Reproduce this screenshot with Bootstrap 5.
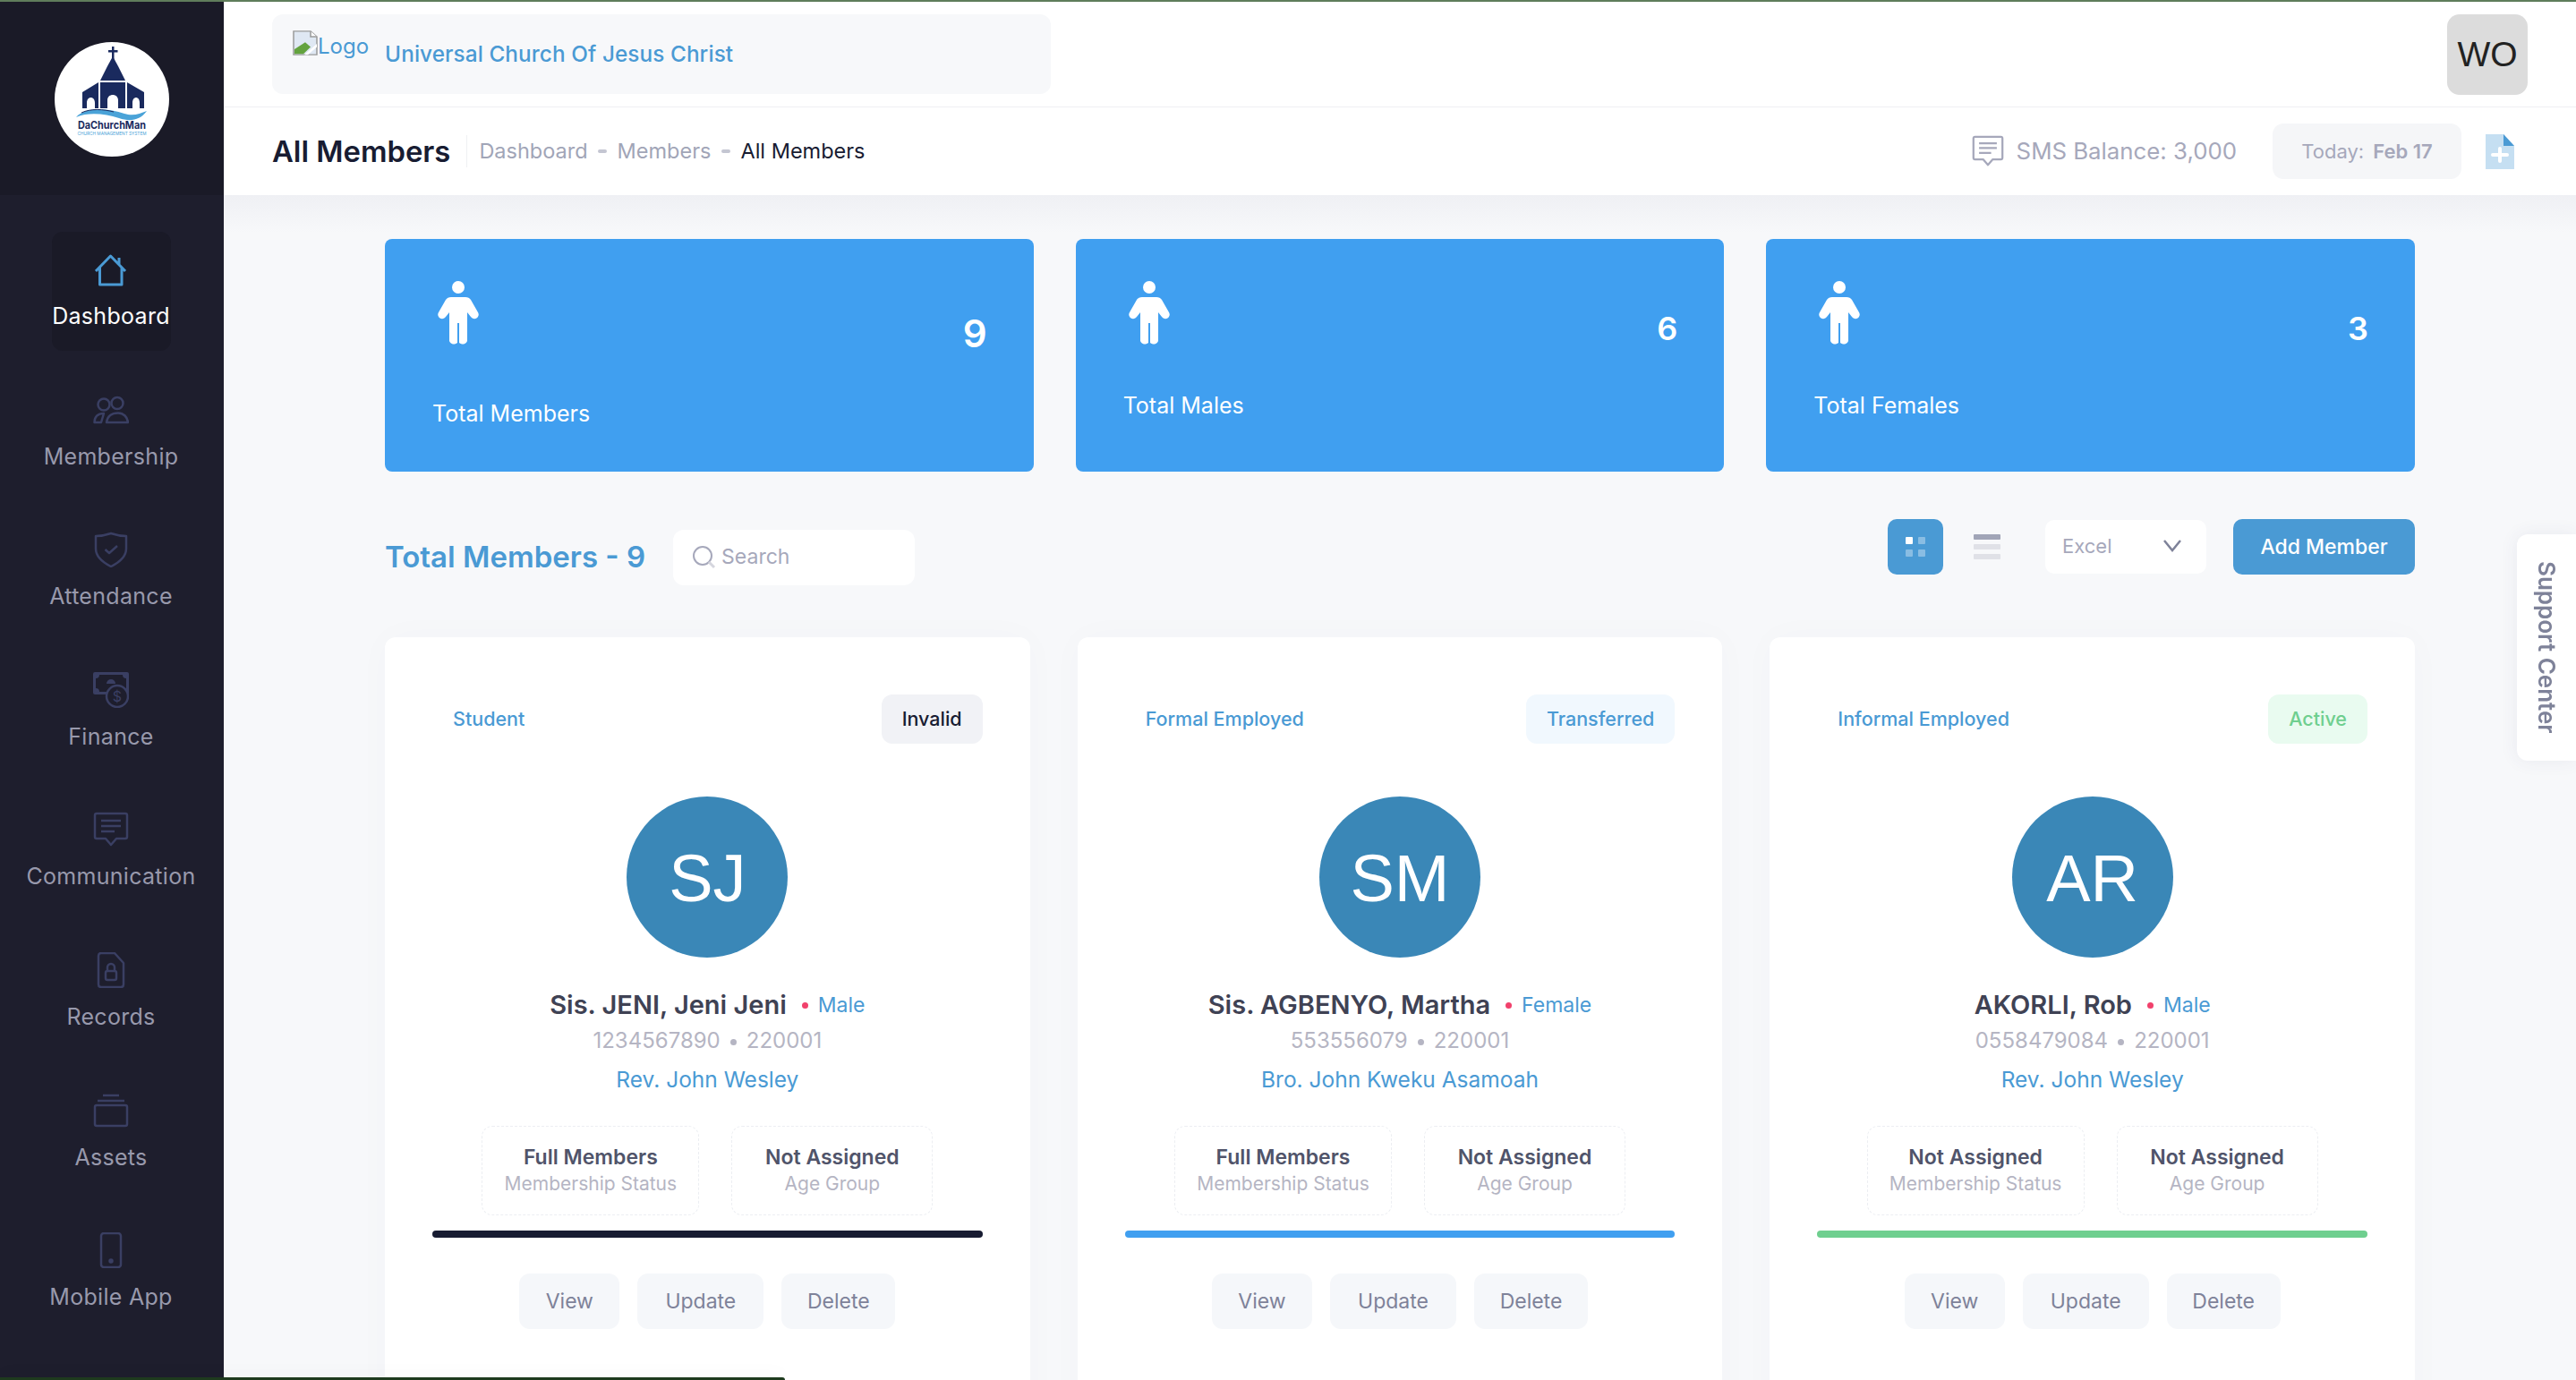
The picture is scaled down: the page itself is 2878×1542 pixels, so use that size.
<!DOCTYPE html>
<html lang="en">
<head>
    <meta charset="UTF-8">
    <title>All Members</title>
    <link href="https://cdn.jsdelivr.net/npm/bootstrap@5.3.2/dist/css/bootstrap.min.css" rel="stylesheet">
    <style>
        html, body {
            height: 100%;
        }

        body {
            font-family: Inter, "Noto Sans", sans-serif;
            background: #f7f8fa;
            overflow: hidden;
        }

        .app-shell {
            height: 100vh;
            border-top: 2px solid #5f7d5b;
        }

        /* sidebar */
        .side-col {
            width: 250px;
            flex: 0 0 250px;
            background: #1e1e2d;
        }

        .side-brand {
            height: 216px;
            background: #1a1a27;
            padding-top: 45px;
        }

        .brand-disc {
            width: 128px;
            height: 128px;
            display: block;
            margin: 0 auto;
        }

        .side-nav {
            padding: 41px 2px 0 0;
        }

        .side-item {
            width: 133px;
            height: 133px;
            margin: 0 auto 23.6px;
            padding-top: 22px;
            border-radius: 12px;
            color: #9899ac;
            font-size: 25px;
            letter-spacing: .3px;
            line-height: 30px;
            text-decoration: none;
            white-space: nowrap;
        }

        .side-item.is-on {
            background: #1a1a27;
            color: #fff;
        }

        .side-ico {
            width: 40px;
            height: 40px;
            margin-bottom: 17px;
            flex: 0 0 40px;
            color: #3a3f63;
        }

        .is-on .side-ico {
            color: #4a9ad4;
        }

        /* header */
        .main-col {
            min-width: 0;
        }

        .top-strip {
            height: 118px;
            padding: 14px 54px 0 54px;
            background: #fff;
            border-bottom: 1px solid #eff0f3;
        }

        .org-banner {
            width: 870px;
            height: 89px;
            padding-left: 23px;
            background: #f7f8fa;
            border-radius: 12px;
        }

        .org-broken {
            margin-top: -25px;
        }

        .org-logo {
            color: #4a9ad4;
            font-size: 24px;
            line-height: 34px;
            margin-top: -17px;
        }

        .org-name {
            margin-left: 18px;
            color: #4a9ad4;
            font-size: 24.3px;
            font-weight: 500;
            letter-spacing: .1px;
        }

        .user-box {
            width: 90px;
            height: 90px;
            border-radius: 14px;
            background: #dcdcdc;
            color: #222;
            font-family: "Liberation Sans", Arial, sans-serif;
            font-size: 39px;
        }

        .sub-strip {
            height: 98px;
            padding: 0 69px 0 54px;
            background: #fff;
        }

        .page-title {
            margin: 0;
            padding-right: 18px;
            border-right: 1px solid #eff0f3;
            color: #181c32;
            font-size: 32.8px;
            line-height: 36px;
            font-weight: 600;
        }

        .crumbs {
            margin-left: 13px;
            color: #a1a5b7;
            font-size: 23.5px;
        }

        .crumb-sep {
            width: 10px;
            height: 4px;
            margin: 0 11.5px;
            background: #c4c6d2;
            border-radius: 2px;
        }

        .crumb-now {
            color: #181c32;
        }

        .sms-note {
            color: #a6a8bb;
            font-size: 25.8px;
        }

        .sms-ico {
            width: 36px;
            height: 36px;
            margin-right: 14px;
        }

        .today-box {
            width: 211px;
            height: 62px;
            margin-left: 40px;
            background: #f5f6f8;
            border-radius: 12px;
            color: #a6a8bb;
            font-size: 22px;
        }

        .today-box b {
            font-weight: 600;
            margin-left: 10px;
        }

        .doc-ico {
            width: 32px;
            height: 40px;
            margin-left: 27px;
        }

        /* content */
        .page-body {
            min-height: 0;
            padding: 49px 180px 0;
            background: linear-gradient(#eff0f4, #f7f8fa 42px);
        }

        .tile-grid {
            display: grid;
            grid-template-columns: repeat(3, 1fr);
            gap: 47px;
        }

        .stat-tile {
            height: 260px;
            padding: 47px 52px 0 53px;
            background: #409ff0;
            border: 0;
            border-radius: 8px;
            color: #fff;
        }

        .stat-tile svg {
            width: 46px;
            height: 72px;
            margin-left: 6px;
        }

        .stat-label {
            margin-top: 60px;
            font-size: 25px;
            line-height: 32px;
        }

        .stat-label.is-up {
            margin-top: 51px;
        }

        .stat-num {
            font-size: 36px;
            font-weight: 600;
            line-height: 44px;
            margin-top: 31px;
        }

        .stat-num.is-big {
            font-size: 42px;
            margin-top: 37px;
        }

        .list-head {
            margin-top: 53px;
            height: 74px;
        }

        .list-title {
            margin: 12px 0 0;
            color: #4a9ad4;
            font-size: 33px;
            line-height: 60px;
            font-weight: 600;
        }

        .find-box {
            width: 270px;
            height: 62px;
            margin: 12px 0 0 31px;
            padding: 0 0 2px 20px;
            background: #fff;
            border-radius: 12px;
            color: #a6a8bb;
            font-size: 23px;
        }

        .find-box svg {
            width: 28px;
            height: 28px;
            margin-right: 6px;
        }

        .view-btn {
            width: 62px;
            height: 62px;
            background: #4a9ad4;
            border-radius: 10px;
        }

        .rows-ico {
            width: 30px;
            height: 28px;
            margin: 0 50px 0 34px;
        }

        .export-pick {
            width: 180px;
            height: 60px;
            padding: 0 28px 2px 19px;
            background: #fff;
            border-radius: 10px;
            color: #a6a8bb;
            font-size: 22px;
        }

        .add-btn {
            width: 203px;
            height: 62px;
            margin-left: 30px;
            background: #4a9ad4;
            border: 0;
            border-radius: 10px;
            color: #fff;
            font-size: 23px;
            font-weight: 500;
        }

        .add-btn:hover {
            background: #3a87b7;
            color: #fff;
        }

        .person-grid {
            display: grid;
            grid-template-columns: repeat(3, 1fr);
            gap: 53px;
            margin-top: 58px;
        }

        .person-card {
            padding: 64px 53px 100px;
            background: #fff;
            border: 0;
            border-radius: 12px;
            box-shadow: 0 0 40px rgba(60, 70, 110, .025);
        }

        .person-kind {
            margin-left: 23px;
            color: #4a9ad4;
            font-size: 21.5px;
            font-weight: 500;
        }

        .state-tag {
            height: 55px;
            padding: 0 23px;
            border-radius: 12px;
            font-size: 21.5px;
            font-weight: 500;
        }

        .tag-invalid {
            background: #f1f2f6;
            color: #181c32;
        }

        .tag-moved {
            background: #f1f8fe;
            color: #4a9ad4;
        }

        .tag-active {
            background: #e9fbf0;
            color: #6fcf8f;
        }

        .initials {
            width: 180px;
            height: 180px;
            margin: 59px auto 0;
            padding-top: 2px;
            background: #3a87b7;
            border-radius: 50%;
            color: #fff;
            font-family: "Liberation Sans", Arial, sans-serif;
            font-size: 74px;
        }

        .name-line {
            margin-top: 33px;
            height: 40px;
            white-space: nowrap;
        }

        .name-line strong {
            color: #3f4254;
            font-size: 29px;
            font-weight: 600;
        }

        .sex-dot {
            width: 7px;
            height: 7px;
            margin: 0 11px 0 17px;
            background: #f1416c;
            border-radius: 50%;
        }

        .sex-text {
            color: #4a9ad4;
            font-size: 23px;
        }

        .id-line {
            height: 40px;
            line-height: 40px;
            color: #b5b5c3;
            font-size: 24px;
        }

        .id-dot {
            display: inline-block;
            width: 7px;
            height: 7px;
            margin: 0 11px;
            vertical-align: middle;
            background: #b5b5c3;
            border-radius: 50%;
        }

        .pastor-line {
            height: 40px;
            margin-top: 3px;
            line-height: 40px;
            color: #4a9ad4;
            font-size: 24.5px;
        }

        .fact-row {
            margin-top: 32px;
            gap: 36px;
        }

        .fact-box {
            height: 100px;
            border: 1px dashed #eceef2;
            border-radius: 12px;
        }

        .fact-wide {
            width: 243px;
        }

        .fact-slim {
            width: 225px;
        }

        .fact-main {
            color: #50546a;
            font-size: 23px;
            font-weight: 600;
            line-height: 30px;
        }

        .fact-sub {
            color: #b5b5c3;
            font-size: 21px;
            line-height: 30px;
            white-space: nowrap;
        }

        .level-bar {
            height: 8px;
            margin-top: 17px;
            border-radius: 4px;
        }

        .bar-navy {
            background: #181c32;
        }

        .bar-blue {
            background: #409ff0;
        }

        .bar-green {
            background: #6fcf8f;
        }

        .act-row {
            margin-top: 40px;
            gap: 20px;
        }

        .act-btn {
            height: 62px;
            padding: 0;
            background: #f5f7fa;
            border: 0;
            border-radius: 12px;
            color: #7e8299;
            font-size: 23px;
        }

        .act-view {
            width: 112px;
        }

        .act-update {
            width: 141px;
        }

        .act-delete {
            width: 127px;
        }

        /* overlays */
        .support-tab {
            position: fixed;
            top: 597px;
            right: 0;
            width: 66px;
            height: 253px;
            background: #fff;
            border-radius: 12px 0 0 12px;
            box-shadow: 0 0 20px rgba(60, 70, 110, .08);
            color: #7e8299;
            font-size: 26px;
            font-weight: 600;
        }

        .support-tab span {
            writing-mode: vertical-rl;
        }

        .foot-strip {
            position: fixed;
            left: 0;
            bottom: 0;
            width: 877px;
            height: 3px;
            background: #1e3a1e;
            border-radius: 0 6px 0 0;
            box-shadow: 0 -4px 18px rgba(0, 0, 0, .07);
        }
    </style>
</head>
<body>
<div class="app-shell d-flex">
    <aside class="side-col">
        <div class="side-brand">
            <svg class="brand-disc" viewBox="0 0 128 128">
                <circle cx="64" cy="64" r="64" fill="#fff"/>
                <g fill="#1a2a5e">
                    <rect x="64" y="5" width="2.500" height="17"/>
                    <rect x="60" y="9" width="10.500" height="2.500"/>
                    <path d="M65 16 L71 27 L79 43 H51 L59 27 Z"/>
                    <path d="M51 45 H79 V74 H71 V65 C71 57 59 57 59 65 V74 H51 Z"/>
                    <path d="M49 45 V74 H45 V68 C45 60 36 60 36 68 V74 H31 V56 Z"/>
                    <path d="M81 45 L100 56 V74 H95 V68 C95 60 87 60 87 68 V74 H81 Z"/>
                </g>
                <path d="M24 84 C34 72 60 74 78 80 C88 83 95 80 103 77 C95 88 84 89 72 85 C56 80 38 78 24 84 Z" fill="#4aa3d8"/>
                <path d="M30 79 C40 74 55 75 66 78" fill="none" stroke="#1a2a5e" stroke-width="1"/>
                <text x="64" y="97" text-anchor="middle" textLength="76" lengthAdjust="spacingAndGlyphs" font-family="Inter, sans-serif" font-weight="700" font-size="12" fill="#1a2a5e">DaChurchMan</text>
                <text x="64" y="104" text-anchor="middle" textLength="77" lengthAdjust="spacingAndGlyphs" font-family="Inter, sans-serif" font-size="5" fill="#4aa3d8">CHURCH MANAGEMENT SYSTEM</text>
            </svg>
        </div>
        <nav class="side-nav">
            <a href="#" class="side-item is-on d-flex flex-column align-items-center">
                <svg class="side-ico" viewBox="0 0 40 40" fill="none" stroke="currentColor" stroke-width="3" stroke-linejoin="round"><path d="M3 22 L19.500 5 L36 22 M7.500 18 V37 H32 V18 M29 7 V15"/></svg>
                Dashboard
            </a>
            <a href="#" class="side-item d-flex flex-column align-items-center">
                <svg class="side-ico" viewBox="0 0 40 40" fill="none" stroke="currentColor" stroke-width="2.500" stroke-linejoin="round"><circle cx="12" cy="14" r="6.500"/><circle cx="27" cy="12.500" r="6.500"/><path d="M1.500 34 C1.500 28 5 24 12 24 L9 34 Z M15 34 C16 27 21 23.500 28 23.500 C34 23.500 38.500 28 39 34 Z"/></svg>
                Membership
            </a>
            <a href="#" class="side-item d-flex flex-column align-items-center">
                <svg class="side-ico" viewBox="0 0 40 40" fill="none" stroke="currentColor" stroke-width="2.500" stroke-linejoin="round"><path d="M20 2 C26 4 31 5 37 5 V19 C37 28 28 35 20 39 C12 35 3 28 3 19 V5 C9 5 14 4 20 2 Z"/><path d="M13.500 20 L18 24 L27 16"/></svg>
                Attendance
            </a>
            <a href="#" class="side-item d-flex flex-column align-items-center">
                <svg class="side-ico" viewBox="0 0 40 40">
                    <rect x="0" y="0" width="40" height="25" rx="2" fill="currentColor"/>
                    <path d="M7 3 H33 Q33 7 37 7 V18 Q33 18 33 22 H7 Q7 18 3 18 V7 Q7 7 7 3 Z" fill="#1e1e2d"/>
                    <path d="M15 13 A5 5 0 0 1 25 13 Z" fill="currentColor"/>
                    <circle cx="27" cy="27" r="12" fill="#1e1e2d" stroke="currentColor" stroke-width="2.500"/>
                    <text x="27" y="33" text-anchor="middle" font-family="Inter, sans-serif" font-size="16" fill="currentColor">$</text>
                </svg>
                Finance
            </a>
            <a href="#" class="side-item d-flex flex-column align-items-center">
                <svg class="side-ico" viewBox="0 0 40 40" fill="none" stroke="currentColor" stroke-width="2.500" stroke-linejoin="round"><path d="M2 4 Q2 2 4 2 H36 Q38 2 38 4 V28 Q38 30 36 30 H26 L20 37 L14 30 H4 Q2 30 2 28 Z"/><path d="M9 10 H31 M9 16 H31 M9 22 H24"/></svg>
                Communication
            </a>
            <a href="#" class="side-item d-flex flex-column align-items-center">
                <svg class="side-ico" viewBox="0 0 40 40" fill="none" stroke="currentColor" stroke-width="2.500" stroke-linejoin="round"><path d="M6 4 Q6 1 9 1 H24 L34 12 V36 Q34 39 31 39 H9 Q6 39 6 36 Z"/><rect x="14" y="21" width="12" height="10" rx="2"/><path d="M16 21 V17 A4 4 0 0 1 24 17 V21"/></svg>
                Records
            </a>
            <a href="#" class="side-item d-flex flex-column align-items-center">
                <svg class="side-ico" viewBox="0 0 40 40" fill="none" stroke="currentColor" stroke-width="2.500" stroke-linejoin="round"><rect x="2" y="14" width="36" height="23" rx="2"/><path d="M5 9 H35 M11 3 H29"/></svg>
                Assets
            </a>
            <a href="#" class="side-item d-flex flex-column align-items-center">
                <svg class="side-ico" viewBox="0 0 40 40" fill="none" stroke="currentColor" stroke-width="2.500"><rect x="9" y="1" width="22" height="38" rx="3"/><circle cx="20" cy="32" r="1.500" fill="currentColor"/></svg>
                Mobile App
            </a>
        </nav>
    </aside>

    <main class="main-col flex-grow-1 d-flex flex-column">
        <header class="top-strip flex-shrink-0 d-flex justify-content-between align-items-start">
            <div class="org-banner d-flex align-items-center">
                <svg width="28" height="28" viewBox="0 0 28 32" preserveAspectRatio="none" class="flex-shrink-0 org-broken">
                    <path d="M1 1 H20 L27 8 V31 H1 Z" fill="#dfe8f3" stroke="#9a9a9a" stroke-width="1.500"/>
                    <path d="M20 1 V8 H27" fill="#fff" stroke="#9a9a9a" stroke-width="1.500"/>
                    <path d="M2 30 V24 L14 15 L20 21 L12 30 Z" fill="#63a33e"/>
                    <path d="M27 17 L13 31 H17 L27 21 Z" fill="#fff"/>
                </svg>
                <span class="org-logo">Logo</span>
                <span class="org-name">Universal Church Of Jesus Christ</span>
            </div>
            <div class="user-box d-flex align-items-center justify-content-center">WO</div>
        </header>

        <div class="sub-strip flex-shrink-0 d-flex justify-content-between align-items-center">
            <div class="d-flex align-items-center">
                <h1 class="page-title">All Members</h1>
                <div class="crumbs d-flex align-items-center">
                    <span>Dashboard</span><span class="crumb-sep"></span><span>Members</span><span class="crumb-sep"></span><span class="crumb-now">All Members</span>
                </div>
            </div>
            <div class="d-flex align-items-center">
                <div class="sms-note d-flex align-items-center">
                    <svg class="sms-ico" viewBox="0 0 40 40" fill="none" stroke="#a6a8bb" stroke-width="2.500" stroke-linejoin="round"><path d="M2 4 Q2 2 4 2 H36 Q38 2 38 4 V28 Q38 30 36 30 H26 L20 37 L14 30 H4 Q2 30 2 28 Z"/><path d="M9 10 H31 M9 16 H31 M9 22 H24"/></svg>
                    SMS Balance: 3,000
                </div>
                <div class="today-box d-flex align-items-center justify-content-center">Today: <b>Feb 17</b></div>
                <svg class="doc-ico" viewBox="0 0 32 40"><path d="M0 1 H20 L32 14 V40 H0 Z" fill="#c5dff2"/><path d="M20 1 L32 14 H20 Z" fill="#4a9ad4"/><path d="M16 17 V31 M8 24 H24" stroke="#fff" stroke-width="4" stroke-linecap="round"/></svg>
            </div>
        </div>

        <div class="page-body flex-grow-1">
            <section class="tile-grid">
                <div class="card stat-tile flex-row justify-content-between">
                    <div>
                        <svg viewBox="0 0 46 72"><circle cx="23" cy="7" r="7" fill="#fff"/><path fill="#fff" d="M15 18 H31 Q35 18 37 21 L45 35 A4.500 4.500 0 0 1 37 40 L33 35 V67 A5.500 5.500 0 0 1 24 69 V47 H22 V69 A5.500 5.500 0 0 1 13 67 V35 L9 40 A4.500 4.500 0 0 1 1 35 L9 21 Q11 18 15 18 Z"/></svg>
                        <div class="stat-label">Total Members</div>
                    </div>
                    <div class="stat-num is-big">9</div>
                </div>
                <div class="card stat-tile flex-row justify-content-between">
                    <div>
                        <svg viewBox="0 0 46 72"><circle cx="23" cy="7" r="7" fill="#fff"/><path fill="#fff" d="M15 18 H31 Q35 18 37 21 L45 35 A4.500 4.500 0 0 1 37 40 L33 35 V67 A5.500 5.500 0 0 1 24 69 V47 H22 V69 A5.500 5.500 0 0 1 13 67 V35 L9 40 A4.500 4.500 0 0 1 1 35 L9 21 Q11 18 15 18 Z"/></svg>
                        <div class="stat-label is-up">Total Males</div>
                    </div>
                    <div class="stat-num">6</div>
                </div>
                <div class="card stat-tile flex-row justify-content-between">
                    <div>
                        <svg viewBox="0 0 46 72"><circle cx="23" cy="7" r="7" fill="#fff"/><path fill="#fff" d="M15 18 H31 Q35 18 37 21 L45 35 A4.500 4.500 0 0 1 37 40 L33 35 V67 A5.500 5.500 0 0 1 24 69 V47 H22 V69 A5.500 5.500 0 0 1 13 67 V35 L9 40 A4.500 4.500 0 0 1 1 35 L9 21 Q11 18 15 18 Z"/></svg>
                        <div class="stat-label is-up">Total Females</div>
                    </div>
                    <div class="stat-num">3</div>
                </div>
            </section>

            <section class="list-head d-flex justify-content-between align-items-start">
                <div class="d-flex">
                    <h2 class="list-title">Total Members - 9</h2>
                    <div class="find-box d-flex align-items-center">
                        <svg viewBox="0 0 28 28" fill="none" stroke="#a6a8bb" stroke-width="2"><circle cx="13" cy="13" r="10"/><path d="M20 20 L26 26" stroke="#d5d6de" stroke-width="3"/></svg>
                        Search
                    </div>
                </div>
                <div class="d-flex align-items-center">
                    <div class="view-btn d-flex align-items-center justify-content-center">
                        <svg width="22" height="22" viewBox="0 0 22 22"><rect width="8" height="8" rx="1" fill="#fff"/><rect x="14" width="8" height="8" rx="1" fill="#fff" opacity=".35"/><rect y="14" width="8" height="8" rx="1" fill="#fff" opacity=".35"/><rect x="14" y="14" width="8" height="8" rx="1" fill="#fff" opacity=".35"/></svg>
                    </div>
                    <svg class="rows-ico" viewBox="0 0 30 28"><rect width="30" height="6" rx="1" fill="#a1a5b7"/><rect y="11" width="30" height="6" rx="1" fill="#e0e1e7"/><rect y="22" width="30" height="6" rx="1" fill="#e0e1e7"/></svg>
                    <div class="export-pick d-flex align-items-center justify-content-between">
                        Excel
                        <svg width="20" height="14" viewBox="0 0 20 14" fill="none" stroke="#7e8299" stroke-width="2.500"><path d="M1 1 L10 12 L19 1"/></svg>
                    </div>
                    <button type="button" class="btn add-btn">Add Member</button>
                </div>
            </section>

            <section class="person-grid">
                <div class="card person-card">
                    <div class="d-flex justify-content-between align-items-center">
                        <span class="person-kind">Student</span>
                        <span class="state-tag tag-invalid d-flex align-items-center">Invalid</span>
                    </div>
                    <div class="initials d-flex align-items-center justify-content-center">SJ</div>
                    <div class="name-line d-flex align-items-center justify-content-center">
                        <strong>Sis. JENI, Jeni Jeni</strong><span class="sex-dot"></span><span class="sex-text">Male</span>
                    </div>
                    <div class="id-line text-center">1234567890<span class="id-dot"></span>220001</div>
                    <div class="pastor-line text-center">Rev. John Wesley</div>
                    <div class="fact-row d-flex justify-content-center">
                        <div class="fact-box fact-wide d-flex flex-column align-items-center justify-content-center"><span class="fact-main">Full Members</span><span class="fact-sub">Membership Status</span></div>
                        <div class="fact-box fact-slim d-flex flex-column align-items-center justify-content-center"><span class="fact-main">Not Assigned</span><span class="fact-sub">Age Group</span></div>
                    </div>
                    <div class="level-bar bar-navy"></div>
                    <div class="act-row d-flex justify-content-center">
                        <button type="button" class="btn act-btn act-view">View</button>
                        <button type="button" class="btn act-btn act-update">Update</button>
                        <button type="button" class="btn act-btn act-delete">Delete</button>
                    </div>
                </div>

                <div class="card person-card">
                    <div class="d-flex justify-content-between align-items-center">
                        <span class="person-kind">Formal Employed</span>
                        <span class="state-tag tag-moved d-flex align-items-center">Transferred</span>
                    </div>
                    <div class="initials d-flex align-items-center justify-content-center">SM</div>
                    <div class="name-line d-flex align-items-center justify-content-center">
                        <strong>Sis. AGBENYO, Martha</strong><span class="sex-dot"></span><span class="sex-text">Female</span>
                    </div>
                    <div class="id-line text-center">553556079<span class="id-dot"></span>220001</div>
                    <div class="pastor-line text-center">Bro. John Kweku Asamoah</div>
                    <div class="fact-row d-flex justify-content-center">
                        <div class="fact-box fact-wide d-flex flex-column align-items-center justify-content-center"><span class="fact-main">Full Members</span><span class="fact-sub">Membership Status</span></div>
                        <div class="fact-box fact-slim d-flex flex-column align-items-center justify-content-center"><span class="fact-main">Not Assigned</span><span class="fact-sub">Age Group</span></div>
                    </div>
                    <div class="level-bar bar-blue"></div>
                    <div class="act-row d-flex justify-content-center">
                        <button type="button" class="btn act-btn act-view">View</button>
                        <button type="button" class="btn act-btn act-update">Update</button>
                        <button type="button" class="btn act-btn act-delete">Delete</button>
                    </div>
                </div>

                <div class="card person-card">
                    <div class="d-flex justify-content-between align-items-center">
                        <span class="person-kind">Informal Employed</span>
                        <span class="state-tag tag-active d-flex align-items-center">Active</span>
                    </div>
                    <div class="initials d-flex align-items-center justify-content-center">AR</div>
                    <div class="name-line d-flex align-items-center justify-content-center">
                        <strong>AKORLI, Rob</strong><span class="sex-dot"></span><span class="sex-text">Male</span>
                    </div>
                    <div class="id-line text-center">0558479084<span class="id-dot"></span>220001</div>
                    <div class="pastor-line text-center">Rev. John Wesley</div>
                    <div class="fact-row d-flex justify-content-center">
                        <div class="fact-box fact-wide d-flex flex-column align-items-center justify-content-center"><span class="fact-main">Not Assigned</span><span class="fact-sub">Membership Status</span></div>
                        <div class="fact-box fact-slim d-flex flex-column align-items-center justify-content-center"><span class="fact-main">Not Assigned</span><span class="fact-sub">Age Group</span></div>
                    </div>
                    <div class="level-bar bar-green"></div>
                    <div class="act-row d-flex justify-content-center">
                        <button type="button" class="btn act-btn act-view">View</button>
                        <button type="button" class="btn act-btn act-update">Update</button>
                        <button type="button" class="btn act-btn act-delete">Delete</button>
                    </div>
                </div>
            </section>
        </div>
    </main>
</div>

<div class="support-tab d-flex align-items-center justify-content-center"><span>Support Center</span></div>
<div class="foot-strip"></div>
<script src="https://cdn.jsdelivr.net/npm/bootstrap@5.3.2/dist/js/bootstrap.bundle.min.js"></script>
</body>
</html>
